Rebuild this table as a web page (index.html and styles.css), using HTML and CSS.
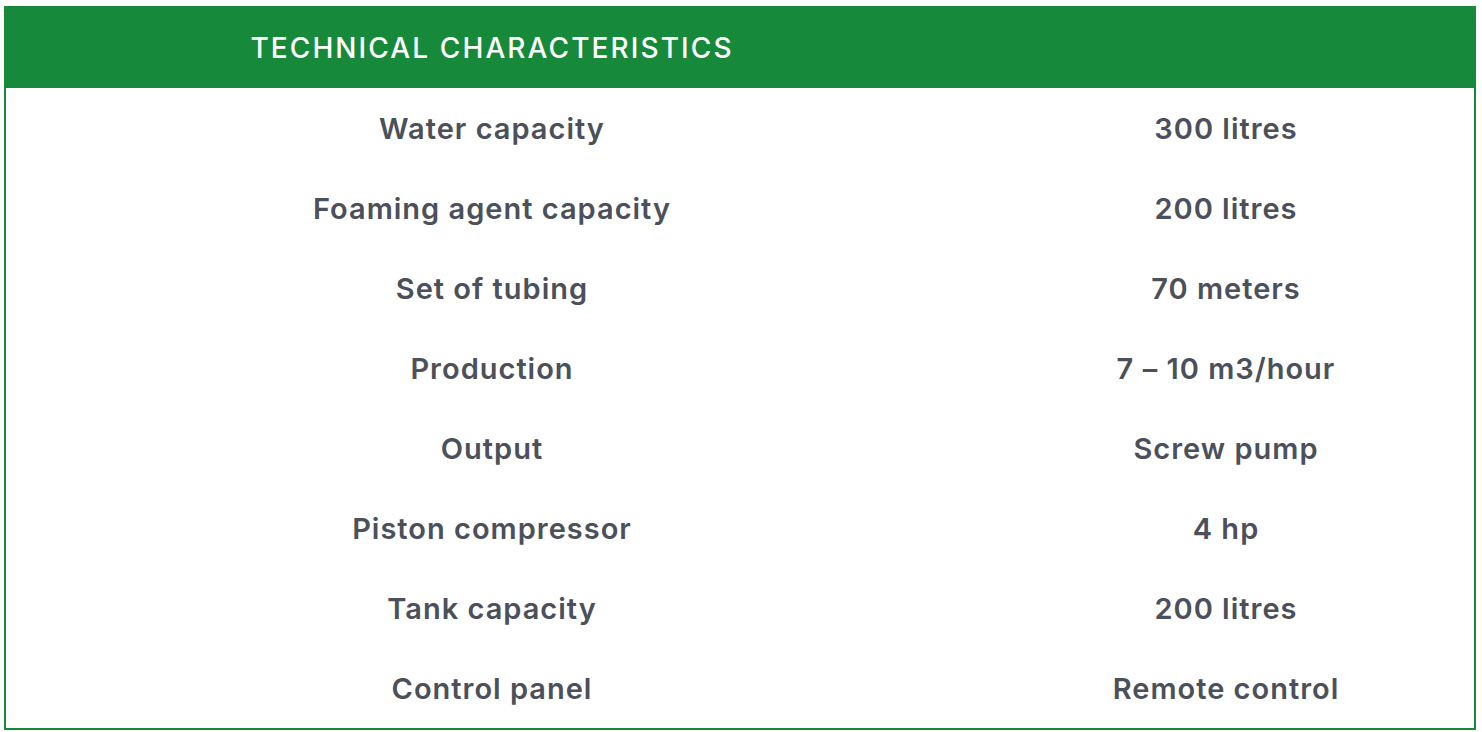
FILE: index.html
```html
<!DOCTYPE html>
<html>
<head>
<meta charset="utf-8">
<link rel="stylesheet" href="styles.css">
</head>
<body>
<div class="wrap">
<table class="specs">
  <thead>
    <tr><th class="col-a">TECHNICAL CHARACTERISTICS</th><th class="col-b"></th></tr>
  </thead>
  <tbody>
    <tr><td>Water capacity</td><td>300 litres</td></tr>
    <tr><td>Foaming agent capacity</td><td>200 litres</td></tr>
    <tr><td>Set of tubing</td><td>70 meters</td></tr>
    <tr><td>Production</td><td>7 – 10 m3/hour</td></tr>
    <tr><td>Output</td><td>Screw pump</td></tr>
    <tr><td>Piston compressor</td><td>4 hp</td></tr>
    <tr><td>Tank capacity</td><td>200 litres</td></tr>
    <tr><td>Control panel</td><td>Remote control</td></tr>
  </tbody>
</table>
</div>
</body>
</html>
```
FILE: styles.css
```css
html, body { margin: 0; padding: 0; background: #fff; }
.wrap { padding: 6px 6px 2px 4px; }
.specs {
  width: 1472px;
  border-collapse: separate;
  border-spacing: 0;
  border: 2px solid #168a3a;
  border-top: 0;
  font-family: Inter, "Noto Sans", sans-serif;
  table-layout: fixed;
}
.specs th {
  background: #168a3a;
  color: #fff;
  height: 82px;
  padding: 2px 0 0;
  box-sizing: border-box;
  font-size: 28px;
  font-weight: 500;
  letter-spacing: 2.1px;
  text-align: center;
  vertical-align: middle;
}
.specs thead tr th:first-child { box-shadow: -2px 0 0 #168a3a; }
.specs thead tr th:last-child { box-shadow: 2px 0 0 #168a3a; }
.col-a { width: 972px; }
.col-b { width: 496px; }
.specs td {
  height: 80px;
  padding: 0;
  box-sizing: border-box;
  text-align: center;
  vertical-align: middle;
  font-size: 29px;
  font-weight: 600;
  letter-spacing: 1px;
  color: #4b505a;
}
```
